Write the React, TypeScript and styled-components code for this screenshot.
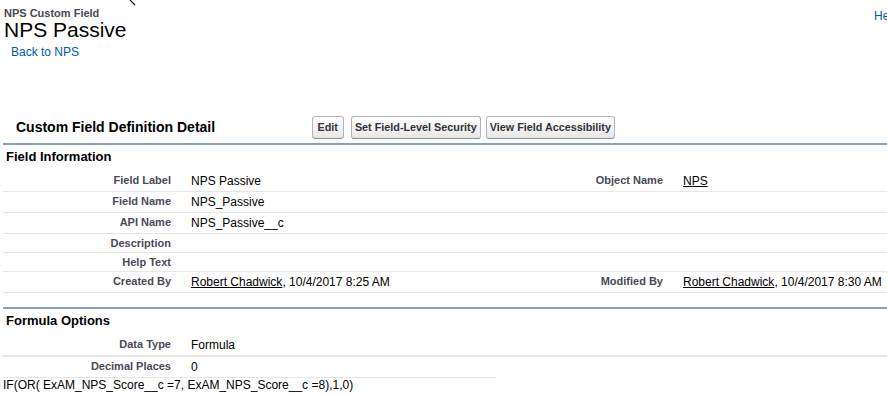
import React from "react";
import styled, { createGlobalStyle } from "styled-components";

const GlobalStyle = createGlobalStyle`
  html, body {
    margin: 0;
    padding: 0;
    background: #ffffff;
    overflow: hidden;
  }
  body {
    font-family: "Liberation Sans", Arial, Helvetica, sans-serif;
    color: #000;
  }
  * { box-sizing: border-box; }
`;

const Page = styled.div`
  position: relative;
  width: 887px;
  height: 395px;
`;

const Cursor = styled.svg`
  position: absolute;
  left: 127px;
  top: 0;
`;

const Header = styled.header`
  display: flex;
  align-items: flex-start;
  padding: 7px 0 0 4px;
`;

const TitleBlock = styled.div`
  flex: 1;
  display: flex;
  flex-direction: column;
  align-items: flex-start;
`;

const Kicker = styled.div`
  font-size: 11px;
  line-height: 12px;
  font-weight: bold;
  color: #4a4a56;
`;

const PageTitle = styled.h1`
  margin: 0;
  font-size: 21px;
  line-height: 22px;
  font-weight: normal;
  color: #000;
`;

const BackLink = styled.a`
  margin: 4px 0 0 7px;
  font-size: 12px;
  line-height: 14px;
  color: #015ba7;
  text-decoration: none;
`;

const HelpLink = styled.a`
  width: 13px;
  margin-top: 2px;
  font-size: 12px;
  line-height: 14px;
  color: #015ba7;
  white-space: nowrap;
  text-decoration: none;
`;

const Block = styled.section`
  margin: 53px 0 0 3px;
`;

const BlockHeader = styled.div`
  display: flex;
  align-items: center;
  height: 31px;
`;

const BlockTitle = styled.h2`
  margin: 0;
  width: 308.5px;
  padding-left: 13px;
  font-size: 14px;
  line-height: 17px;
  font-weight: bold;
  color: #000;
`;

const ButtonRow = styled.div`
  display: flex;
  align-items: center;
  gap: 5px;
`;

const Button = styled.button<{ $wide?: boolean }>`
  height: 23px;
  padding: 0 ${(p) => (p.$wide ? "5px" : "3px")};
  margin-right: ${(p) => (p.$wide ? "2px" : "0")};
  border: 1px solid #b5b5b5;
  border-bottom-color: #8f8f8f;
  border-radius: 3px;
  background: linear-gradient(#ffffff, #f4f4f4 50%, #e6e6e6);
  font-family: "Liberation Sans", Arial, Helvetica, sans-serif;
  font-size: 10.8px;
  font-weight: bold;
  line-height: 1;
  color: #333;
  white-space: nowrap;
`;

const Section = styled.div<{ $gap?: number }>`
  margin-top: ${(p) => p.$gap ?? 0}px;
  border-top: 2px solid #8a9dbf;
`;

const SectionTitle = styled.h3`
  margin: 0;
  padding: 4px 3px 6px;
  font-size: 13px;
  line-height: 16px;
  font-weight: bold;
  color: #000;
`;

const Row = styled.div<{ $line?: number; $width?: number }>`
  display: grid;
  grid-template-columns: 178px 300px 192px 1fr;
  width: ${(p) => (p.$width ? `${p.$width}px` : "auto")};
  overflow: ${(p) => (p.$width ? "visible" : "hidden")};
  border-bottom: ${(p) => p.$line ?? 1}px solid #e6e6e6;
`;

const Label = styled.div`
  padding: 3px 10px 3px 2px;
  text-align: right;
  font-size: 11px;
  line-height: 12px;
  font-weight: bold;
  color: #4a4a56;
  white-space: nowrap;
`;

const Value = styled.div`
  padding: 3px 2px 3px 10px;
  font-size: 12px;
  line-height: 14px;
  color: #000;
  white-space: nowrap;
`;

const UserLink = styled.a`
  color: #000;
  text-decoration: underline;
`;

const Formula = styled.div`
  font-size: 12px;
  line-height: 14px;
  color: #000;
  white-space: pre;
`;

type Cell = { label?: string; value?: React.ReactNode };

const DetailRow = ({
  left,
  right,
  line,
  width,
}: {
  left: Cell;
  right?: Cell;
  line?: number;
  width?: number;
}) => (
  <Row $line={line} $width={width}>
    <Label>{left.label}</Label>
    <Value>{left.value}</Value>
    {width ? null : (
      <>
        <Label>{right?.label}</Label>
        <Value>{right?.value}</Value>
      </>
    )}
  </Row>
);

export default function App() {
  return (
    <>
      <GlobalStyle />
      <Page>
        <Cursor width="12" height="7" viewBox="0 0 12 7">
          <path d="M3 0 L8 5" stroke="#fff" strokeWidth="3" />
          <path d="M3 0 L8 5" stroke="#111" strokeWidth="1.3" />
        </Cursor>
        <Header>
          <TitleBlock>
            <Kicker>NPS Custom Field</Kicker>
            <PageTitle>NPS Passive</PageTitle>
            <BackLink href="#">Back to NPS</BackLink>
          </TitleBlock>
          <HelpLink href="#">Help for this Page</HelpLink>
        </Header>

        <Block>
          <BlockHeader>
            <BlockTitle>Custom Field Definition Detail</BlockTitle>
            <ButtonRow>
              <Button $wide>Edit</Button>
              <Button>Set Field-Level Security</Button>
              <Button>View Field Accessibility</Button>
            </ButtonRow>
          </BlockHeader>

          <Section>
            <SectionTitle>Field Information</SectionTitle>
            <DetailRow
              left={{ label: "Field Label", value: "NPS Passive" }}
              right={{ label: "Object Name", value: <UserLink href="#">NPS</UserLink> }}
            />
            <DetailRow left={{ label: "Field Name", value: "NPS_Passive" }} />
            <DetailRow left={{ label: "API Name", value: "NPS_Passive__c" }} />
            <DetailRow left={{ label: "Description" }} />
            <DetailRow left={{ label: "Help Text" }} />
            <DetailRow
              left={{
                label: "Created By",
                value: (
                  <>
                    <UserLink href="#">Robert Chadwick</UserLink>, 10/4/2017 8:25 AM
                  </>
                ),
              }}
              right={{
                label: "Modified By",
                value: (
                  <>
                    <UserLink href="#">Robert Chadwick</UserLink>, 10/4/2017 8:30 AM
                  </>
                ),
              }}
            />
          </Section>

          <Section $gap={14}>
            <SectionTitle>Formula Options</SectionTitle>
            <DetailRow left={{ label: "Data Type", value: "Formula" }} line={2} />
            <DetailRow left={{ label: "Decimal Places", value: "0" }} width={493} />
            <Formula>IF(OR( ExAM_NPS_Score__c =7, ExAM_NPS_Score__c =8),1,0)</Formula>
          </Section>
        </Block>
      </Page>
    </>
  );
}
